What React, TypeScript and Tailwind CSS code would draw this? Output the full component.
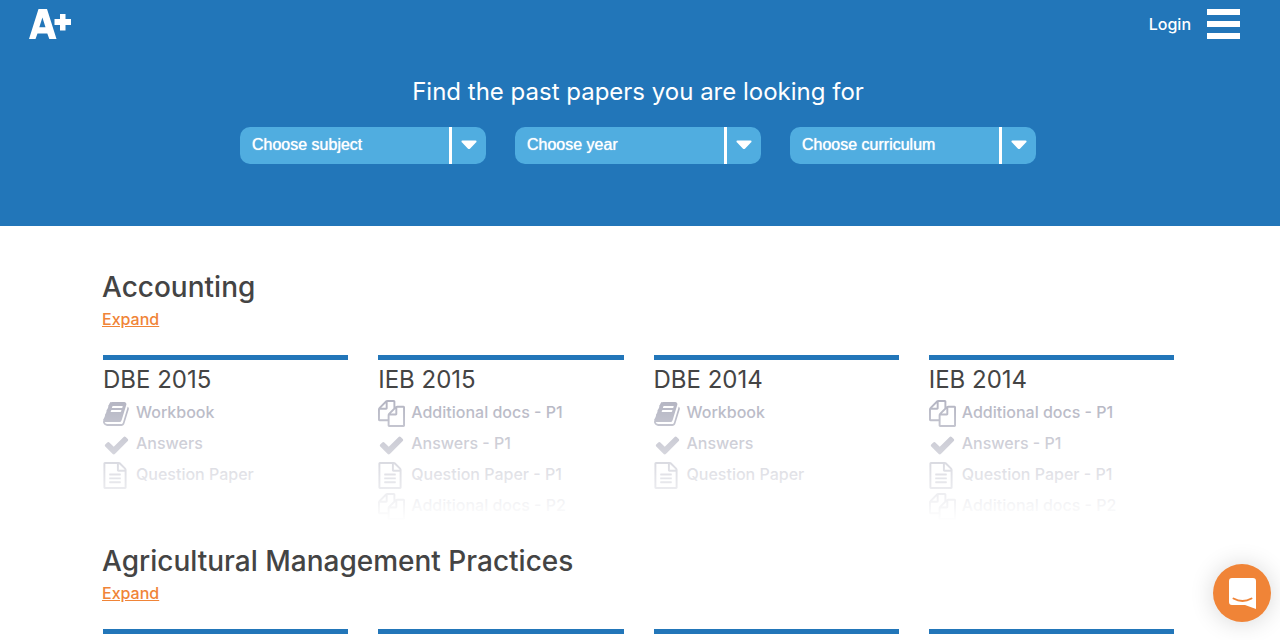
import React from "react";

type IconName = "workbook" | "answers" | "paper" | "docs";

const ICONS: Record<IconName, { viewBox: string; path: string; size: string }> = {
  workbook: {
    viewBox: "60 128 1680 1536",
    size: "w-[26px] h-6",
    path: "M1703 478q40 57 18 129l-275 906q-19 64-76.5 107.5t-122.5 43.5h-923q-77 0-148.5-53.5t-99.5-131.5q-24-67-2-127 0-4 3-27t4-37q1-8-3-21.5t-3-19.5q2-11 8-21t16.5-23.5 16.5-23.5q23-38 45-91.5t30-91.5q3-10 .5-30t-.5-28q3-11 17-28t17-23q21-36 42-92t25-90q1-9-2.5-32t.5-28q4-13 22-30.5t22-22.5q19-26 42.5-84.5t27.5-96.5q1-8-3-25.5t-2-26.5q2-8 9-18t18-23 17-21q8-12 16.5-30.5t15-35 16-36 19.5-32 26.5-23.5 36-11.5 47.5 5.5l-1 3q38-9 51-9h761q74 0 114 56t18 130l-274 906q-36 119-71.5 153.5t-128.5 34.5h-869q-27 0-38 15-11 16-1 43 24 70 144 70h923q29 0 56-15.5t35-41.5l300-987q7-22 5-57 38 15 59 43zm-1064 2q-4 13 2 22.5t20 9.5h608q13 0 25.5-9.5t16.5-22.5l21-64q4-13-2-22.5t-20-9.5h-608q-13 0-25.5 9.5t-16.5 22.5zm-83 256q-4 13 2 22.5t20 9.5h608q13 0 25.5-9.5t16.5-22.5l21-64q4-13-2-22.5t-20-9.5h-608q-13 0-25.5 9.5t-16.5 22.5z",
  },
  answers: {
    viewBox: "0 128 1792 1536",
    size: "w-[27px] h-6",
    path: "M1671 566q0 40-28 68l-724 724-136 136q-28 28-68 28t-68-28l-136-136-362-362q-28-28-28-68t28-68l136-136q28-28 68-28t68 28l294 295 656-657q28-28 68-28t68 28l136 136q28 28 28 68z",
  },
  paper: {
    viewBox: "128 0 1536 1792",
    size: "w-6 h-[27px]",
    path: "M1596 380q28 28 48 76t20 88v1152q0 40-28 68t-68 28h-1344q-40 0-68-28t-28-68v-1600q0-40 28-68t68-28h896q40 0 88 20t76 48zm-444-244v376h376q-10-29-22-41l-313-313q-12-12-41-22zm384 1528v-1024h-416q-40 0-68-28t-28-68v-416h-768v1536h1280zm-1024-864q0-14 9-23t23-9h704q14 0 23 9t9 23v64q0 14-9 23t-23 9h-704q-14 0-23-9t-9-23v-64zm736 224q14 0 23 9t9 23v64q0 14-9 23t-23 9h-704q-14 0-23-9t-9-23v-64q0-14 9-23t23-9h704zm0 256q14 0 23 9t9 23v64q0 14-9 23t-23 9h-704q-14 0-23-9t-9-23v-64q0-14 9-23t23-9h704z",
  },
  docs: {
    viewBox: "0 0 1792 1792",
    size: "w-[27px] h-[27px]",
    path: "M1696 384q40 0 68 28t28 68v1216q0 40-28 68t-68 28h-960q-40 0-68-28t-28-68v-288h-544q-40 0-68-28t-28-68v-672q0-40 20-88t48-76l408-408q28-28 76-48t88-20h416q40 0 68 28t28 68v328q68-40 128-40h416zm-544 213l-299 299h299v-299zm-640-384l-299 299h299v-299zm196 647l316-316v-416h-384v416q0 40-28 68t-68 28h-416v640h512v-256q0-40 20-88t48-76zm956 804v-1152h-384v416q0 40-28 68t-68 28h-416v640h896z",
  },
};

type Item = { icon: IconName; label: string };
type Card = { title: string; items: Item[] };

const DBE_ITEMS: Item[] = [
  { icon: "workbook", label: "Workbook" },
  { icon: "answers", label: "Answers" },
  { icon: "paper", label: "Question Paper" },
];

const IEB_ITEMS: Item[] = [
  { icon: "docs", label: "Additional docs - P1" },
  { icon: "answers", label: "Answers - P1" },
  { icon: "paper", label: "Question Paper - P1" },
  { icon: "docs", label: "Additional docs - P2" },
];

const ACCOUNTING: Card[] = [
  { title: "DBE 2015", items: DBE_ITEMS },
  { title: "IEB 2015", items: IEB_ITEMS },
  { title: "DBE 2014", items: DBE_ITEMS },
  { title: "IEB 2014", items: IEB_ITEMS },
];

function Icon({ name }: { name: IconName }) {
  const { viewBox, path, size } = ICONS[name];
  return (
    <svg viewBox={viewBox} className={`${size} shrink-0`} fill="currentColor" aria-hidden="true">
      <path d={path} />
    </svg>
  );
}

function Filter({ id, label }: { id: string; label: string }) {
  return (
    <div className="relative flex h-[37px] w-[246px] overflow-hidden rounded-[10px] bg-[#50ade0]">
      <select
        id={id}
        aria-label={label}
        className="h-full w-full cursor-pointer appearance-none bg-transparent pb-0.5 pl-3 pr-12 font-['Liberation_Sans',sans-serif] text-base text-white outline-none [text-shadow:0_0_1px_white]"
      >
        <option>{label}</option>
      </select>
      <span className="pointer-events-none absolute inset-y-0 right-0 flex w-[37px] items-center justify-center border-l-[3px] border-white pb-0.5">
        <svg viewBox="0 0 16 10" className="h-[10px] w-4" fill="white" aria-hidden="true">
          <path d="M1.5 .5h13q1.3 0 1 1.2-.1.5-.6.9L9.2 8.6Q8 9.6 6.8 8.600L1.100 2.600Q.6 2.200.5 1.700.2.5 1.500.5z" />
        </svg>
      </span>
    </div>
  );
}

function SubjectHeading({ title }: { title: string }) {
  return (
    <>
      <h2 className="text-[28px] font-medium leading-9 text-[#444]">{title}</h2>
      <a href="#expand" className="mt-0.5 inline-block text-base font-medium leading-6 text-[#f08437] underline">
        Expand
      </a>
    </>
  );
}

export default function App() {
  return (
    <div className="min-h-screen bg-white font-['Inter',sans-serif]">
      <header className="h-[226px] bg-[#2276b9] text-white">
        <nav className="flex h-12 items-center justify-between pl-[29px] pr-10">
          <a href="#home" aria-label="A+">
            <svg viewBox="0 0 42 30" className="h-[30px] w-[42px]" fill="white" aria-hidden="true">
              <path fillRule="evenodd" d="M9.500 0h8.500L27.500 30H20.300L18.300 24.500H8.500L6.500 30H0zM13.400 8.500L10.300 18.300H16.500z" />
              <path d="M31 5h5.500v5H42v6h-5.500v5.500H31V16h-5.500v-6H31z" />
            </svg>
          </a>
          <div className="flex items-center gap-4">
            <a href="#login" className="text-base font-medium">
              Login
            </a>
            <button type="button" aria-label="Menu" className="flex w-[33px] flex-col gap-1.5">
              <span className="h-1.5 w-full bg-white" />
              <span className="h-1.5 w-full bg-white" />
              <span className="h-1.5 w-full bg-white" />
            </button>
          </div>
        </nav>
        <h1 className="mt-7 pr-1 text-center text-2xl leading-8">Find the past papers you are looking for</h1>
        <div className="mt-[19px] flex justify-center gap-[29px] pr-1">
          <Filter id="subject" label="Choose subject" />
          <Filter id="year" label="Choose year" />
          <Filter id="curriculum" label="Choose curriculum" />
        </div>
      </header>

      <main className="pl-[102px] pr-[106px] pt-[43px]">
        <section className="h-[274px]">
          <SubjectHeading title="Accounting" />
          <div className="mt-6 grid grid-cols-4 gap-[30px] pl-px">
            {ACCOUNTING.map((card) => (
              <article key={card.title} className="border-t-[5px] border-[#2276b9]">
                <h3 className="h-9 pt-1 text-2xl leading-8 text-[#444]">{card.title}</h3>
                <div className="relative h-[125px] overflow-hidden">
                  <ul className="text-[#b1b2c0]">
                    {card.items.map((item) => (
                      <li key={item.label} className="flex h-[31px] items-center">
                        <span className="flex w-[33px] shrink-0 pt-1">
                          <Icon name={item.icon} />
                        </span>
                        <span className="text-base font-medium">{item.label}</span>
                      </li>
                    ))}
                  </ul>
                  <div className="pointer-events-none absolute inset-0 bg-linear-to-b from-white/0 to-white" />
                </div>
              </article>
            ))}
          </div>
        </section>

        <section>
          <SubjectHeading title="Agricultural Management Practices" />
          <div className="mt-6 grid grid-cols-4 gap-[30px] pl-px">
            {[0, 1, 2, 3].map((column) => (
              <div key={column} className="h-[5px] bg-[#2276b9]" />
            ))}
          </div>
        </section>
      </main>

      <button
        type="button"
        aria-label="Open chat"
        className="fixed bottom-[18px] right-[9px] flex size-[58px] items-center justify-center rounded-full bg-[#f08437] shadow-[0_1px_24px_rgba(0,0,0,0.16)]"
      >
        <svg viewBox="0 0 27 31" className="h-[31px] w-[27px]" aria-hidden="true">
          <path d="M3 0h21q3 0 3 3v28l-11-4H3q-3 0-3-3V3q0-3 3-3z" fill="white" />
          <path d="M4.500 20.500q9 5 18 0" fill="none" stroke="#f08437" strokeWidth="2" strokeLinecap="round" />
        </svg>
      </button>
    </div>
  );
}
